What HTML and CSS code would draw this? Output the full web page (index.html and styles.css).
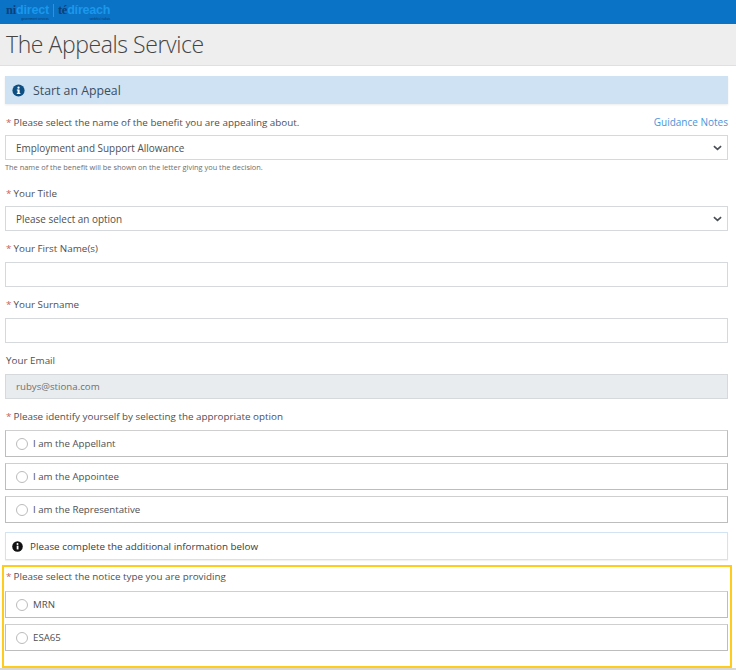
FILE: index.html
```html
<!DOCTYPE html>
<html lang="en">
<head>
  <meta charset="UTF-8" />
  <meta name="viewport" content="width=device-width, initial-scale=1.0"/>
  <title>The Appeals Service</title>
  <link rel="stylesheet" href="styles.css">
</head>
<body>

  <div class="topbar">
    <div class="logo">
      <span class="logo-word logo-ni"><span><b class="dark">ni</b><b class="bright">direct</b></span><small>government services</small></span>
      <span class="logo-sep"></span>
      <span class="logo-word"><span><b class="dark">té</b><b class="bright">díreach</b></span><small>seirbhísí rialtais</small></span>
    </div>
  </div>

  <div class="titlebar">
    <h1>The Appeals Service</h1>
  </div>

  <form class="content">
    <div class="panel-heading">
      <svg class="info-icon" viewBox="0 0 16 16"><circle cx="8" cy="8" r="6.5" fill="#0d4f82"/><rect x="7" y="7" width="2.2" height="4.6" fill="#fff"/><rect x="6.2" y="10.6" width="3.8" height="1.1" fill="#fff"/><rect x="6.2" y="7" width="2" height="1" fill="#fff"/><circle cx="8" cy="5" r="1.2" fill="#fff"/></svg>
      Start an Appeal
    </div>

    <div class="label-row first">
      <label><span class="req">*</span> Please select the name of the benefit you are appealing about.</label>
      <a class="guidance" href="#">Guidance Notes</a>
    </div>
    <div class="select">
      Employment and Support Allowance
      <svg class="chevron" viewBox="0 0 10 6"><path d="M1 1l4 3.6L9 1" fill="none" stroke="#4a4f55" stroke-width="1.8"/></svg>
    </div>
    <p class="help">The name of the benefit will be shown on the letter giving you the decision.</p>

    <label class="field-label title-label"><span class="req">*</span> Your Title</label>
    <div class="select">
      Please select an option
      <svg class="chevron" viewBox="0 0 10 6"><path d="M1 1l4 3.6L9 1" fill="none" stroke="#4a4f55" stroke-width="1.8"/></svg>
    </div>

    <label class="field-label"><span class="req">*</span> Your First Name(s)</label>
    <div class="input"></div>

    <label class="field-label"><span class="req">*</span> Your Surname</label>
    <div class="input"></div>

    <label class="field-label">Your Email</label>
    <div class="input disabled">rubys@stiona.com</div>

    <label class="field-label"><span class="req">*</span> Please identify yourself by selecting the appropriate option</label>
    <div class="radio-box"><span class="radio"></span>I am the Appellant</div>
    <div class="radio-box"><span class="radio"></span>I am the Appointee</div>
    <div class="radio-box"><span class="radio"></span>I am the Representative</div>

    <div class="notice">
      <svg class="notice-icon" viewBox="0 0 16 16"><circle cx="8" cy="8" r="6.5" fill="#111"/><rect x="7" y="7" width="2.2" height="4.6" fill="#fff"/><circle cx="8" cy="5" r="1.2" fill="#fff"/></svg>
      Please complete the additional information below
    </div>

    <div class="highlight">
      <label class="highlight-label"><span class="req">*</span> Please select the notice type you are providing</label>
      <div class="radio-box"><span class="radio"></span>MRN</div>
      <div class="radio-box"><span class="radio"></span>ESA65</div>
    </div>
  </form>

  <div class="page-end"></div>

</body>
</html>
```

FILE: styles.css
```css
body {
  margin: 0;
  height: 670px;
  overflow: hidden;
  background: #fff;
  color: #505050;
  font-family: 'Open Sans', 'Noto Sans', sans-serif;
  font-size: 9.85px;
}

.topbar {
  height: 24px;
  background: #0a73c6;
  padding-left: 6px;
  box-sizing: border-box;
}

.logo {
  display: flex;
  align-items: flex-start;
  gap: 4px;
  height: 24px;
  padding-top: 3px;
  box-sizing: border-box;
}

.logo-word {
  display: flex;
  flex-direction: column;
  align-items: flex-end;
  font-family: 'Liberation Serif', serif;
  font-size: 12.5px;
  line-height: 14px;
  letter-spacing: -0.2px;
}

.logo-word small {
  font-family: 'Liberation Sans', sans-serif;
  font-size: 3px;
  line-height: 4px;
  letter-spacing: 0;
  white-space: nowrap;
  color: #0b3a66;
}

.dark { color: #0d3f78; }
.bright { color: #1a98ec; font-family: 'Liberation Sans', sans-serif; }

.logo-sep {
  width: 1px;
  height: 13px;
  margin-top: 1px;
  background: #3a8fd0;
}

.titlebar {
  height: 42px;
  background: #eee;
  border-bottom: 1px solid #e0e0e0;
  box-sizing: border-box;
  padding-left: 6px;
}

h1 {
  margin: 0;
  font-family: 'Open Sans', sans-serif;
  font-weight: 300;
  font-size: 23px;
  letter-spacing: -0.42px;
  line-height: 41px;
  color: #444;
}

.content {
  padding: 10px 8px 0 5px;
}

.panel-heading {
  box-sizing: border-box;
  display: flex;
  align-items: center;
  height: 28px;
  padding: 1px 0 0 6px;
  background: #cfe2f3;
  box-shadow: 0 1px 2px rgba(0,0,0,.08);
  font-size: 12.3px;
  color: #3a4f62;
}

.info-icon {
  width: 15px;
  height: 15px;
  margin-right: 7px;
}

.label-row {
  display: flex;
  justify-content: space-between;
  align-items: center;
}

.label-row.first {
  box-sizing: border-box;
  margin-top: 10px;
  height: 17px;
  padding-bottom: 1px;
}

.guidance {
  color: #4a94da;
  text-decoration: none;
  font-size: 10px;
}

.req {
  color: #c9605a;
  margin-right: -0.5px;
}

.field-label {
  display: block;
  margin-top: 9px;
  height: 16px;
  line-height: 16px;
  padding-left: 1px;
}

.title-label { margin-top: 12px; }

.label-row label { padding-left: 1px; }

.select, .input {
  box-sizing: border-box;
  height: 25px;
  border: 1px solid #d6d9dc;
  display: flex;
  align-items: center;
  padding-left: 10px;
  position: relative;
  margin-top: 4px;
  font-size: 9.95px;
}

.title-label + .select { margin-top: 5px; }

.input { margin-top: 6px; }

.select .chevron {
  position: absolute;
  right: 5px;
  top: 9px;
  width: 9px;
  height: 6px;
}

.help {
  margin: 2px 0 0;
  font-size: 7.4px;
  line-height: 11px;
  color: #6e6e6e;
}

.disabled {
  background: #e9ecef;
  color: #707070;
  font-size: 9.7px;
}

.radio-box {
  box-sizing: border-box;
  display: flex;
  align-items: center;
  height: 27px;
  margin-top: 6px;
  padding-left: 10px;
  border: 1px solid #bdbdbd;
  border-top-color: #cfcfcf;
  font-size: 9.7px;
}

.radio {
  box-sizing: border-box;
  width: 12px;
  height: 12px;
  margin-right: 5px;
  border: 1px solid #bbb;
  border-radius: 50%;
}

.notice {
  box-sizing: border-box;
  display: flex;
  align-items: center;
  height: 28px;
  margin-top: 9px;
  padding-left: 5px;
  border: 1px solid #d2e4f4;
  box-shadow: 0 1px 1px rgba(0,0,0,.05);
  color: #3c3c3c;
}

.notice-icon {
  width: 13px;
  height: 13px;
  margin-right: 6px;
}

.highlight {
  box-sizing: border-box;
  height: 103px;
  margin: 5px -4px 0 -3px;
  padding: 1px 2px 0 1px;
  border: 2px solid #ffcc1e;
}

.highlight-label {
  display: block;
  height: 17px;
  line-height: 16px;
  padding-left: 1px;
}

.page-end {
  height: 2px;
  background: #d8d8d8;
}
```
